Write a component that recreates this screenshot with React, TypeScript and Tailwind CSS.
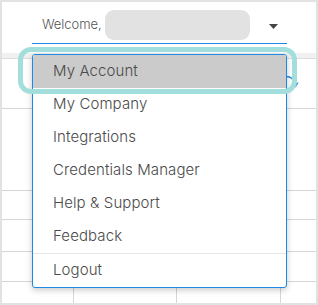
import React from 'react';

const menuItems = [
  'My Account',
  'My Company',
  'Integrations',
  'Credentials Manager',
  'Help & Support',
  'Feedback',
];

export default function App() {
  return (
    <div className="relative w-[318px] h-[305px] overflow-hidden bg-[#e2e2e2] p-[2px] font-['Inter',sans-serif] text-[#555]">
      <div className="flex h-full flex-col bg-white">
        {/* header with the user select */}
        <div className="h-[51px] pl-[30px]">
          <div className="flex h-[42px] w-[255px] items-center border-b-[1.5px] border-[#1e88e5] pt-[4px]">
            <span className="ml-[10px] text-[13px] font-light tracking-[-0.05px] text-[#555]">Welcome,</span>
            <div className="ml-[3px] h-[30px] w-[145px] rounded-[9px] bg-[#e2e2e2]" />
            <svg className="ml-[19px] mt-[4px]" width="9" height="5" viewBox="0 0 9 5">
              <path d="M0 0h9L4.5 5z" fill="#444" />
            </svg>
          </div>
        </div>

        <div className="h-[6px] border-b border-[#dcdcdc] bg-[#f1f1f1]" />

        {/* table behind the menu */}
        <div className="h-[50px] border-b border-[#d6d6d6]" />
        <div className="h-[82px] border-b border-[#d6d6d6]" />
        <div className="h-[29px] border-b border-[#d6d6d6]" />
        <div className="h-[32px] border-b border-[#d6d6d6]" />
        <div className="h-[30px] border-b border-[#d6d6d6]" />
        <div className="grid flex-1 grid-cols-[72px_103px_104px_1fr]">
          <div className="border-r border-[#d6d6d6]" />
          <div className="border-r border-[#d6d6d6]" />
          <div className="border-r border-[#d6d6d6]" />
          <div />
        </div>
      </div>

      {/* refresh icon peeking out */}
      <svg className="absolute left-[280px] top-[72px]" width="22" height="20" viewBox="0 0 22 20">
        <path d="M6 4.5 A8 8 0 0 1 14.5 11.5" fill="none" stroke="#1e88e5" strokeWidth="1.3" />
        <path d="M12.2 11.2 L18.6 10.6 L15.6 15.6 Z" fill="#1e88e5" />
      </svg>

      {/* dropdown menu */}
      <div className="absolute left-[32px] top-[54px] w-[255px] overflow-hidden rounded-[3px] border border-[#1e88e5] bg-white shadow-[0_2px_6px_rgba(0,0,0,0.22)]">
        {menuItems.map((item, i) => (
          <div
            key={item}
            className={`flex h-[33px] items-center pl-[20px] text-[15px] font-light tracking-[0.1px] text-[#4a4a4a] ${i === 0 ? 'bg-[#cbcbcb]' : ''}`}
          >
            {item}
          </div>
        ))}
        <div className="border-t border-[#e6e6e6]" />
        <div className="flex h-[33px] items-center pl-[20px] text-[15px] font-light tracking-[0.1px] text-[#4a4a4a]">Logout</div>
      </div>

      {/* highlight ring */}
      <div className="pointer-events-none absolute left-[18px] top-[47px] h-[47px] w-[279px] rounded-[13px] border-[5px] border-[#a2dedb]" />
    </div>
  );
}
